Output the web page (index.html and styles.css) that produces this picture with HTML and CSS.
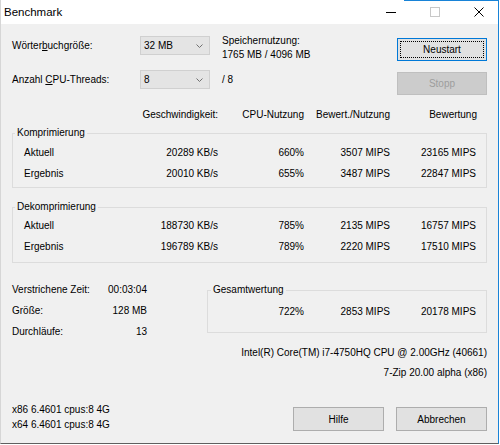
FILE: index.html
```html
<!DOCTYPE html>
<html lang="de">
<head>
<meta charset="utf-8">
<title>Benchmark</title>
<link rel="stylesheet" href="styles.css">
</head>
<body>
<div class="window">
  <div class="titlebar">
    <span class="title">Benchmark</span>
    <div class="caption-buttons">
      <span class="cap-btn"><svg width="10" height="10" viewBox="0 0 10 10"><path d="M0 5.5H10" stroke="#000" stroke-width="1"/></svg></span>
      <span class="cap-btn"><svg width="10" height="10" viewBox="0 0 10 10"><rect x="0.5" y="0.5" width="9" height="9" fill="none" stroke="#c8c8c8"/></svg></span>
      <span class="cap-btn"><svg width="10" height="10" viewBox="0 0 10 10"><path d="M0.5 0.5L9.5 9.5M9.5 0.5L0.5 9.5" stroke="#000" stroke-width="1"/></svg></span>
    </div>
  </div>
  <div class="content">
    <div class="top">
      <span class="lbl">Wörter<u>b</u>uchgröße:</span>
      <div class="combo"><span>32 MB</span><svg class="chev" width="7" height="4" viewBox="0 0 7 4"><path d="M0.5 0.5L3.5 3.5L6.5 0.5" fill="none" stroke="#707070"/></svg></div>
      <div class="mem"><div>Speichernutzung:</div><div>1765 MB / 4096 MB</div></div>
      <button class="btn btn-default">Neustart</button>
      <span class="lbl">Anzahl <u>C</u>PU-Threads:</span>
      <div class="combo"><span>8</span><svg class="chev" width="7" height="4" viewBox="0 0 7 4"><path d="M0.5 0.5L3.5 3.5L6.5 0.5" fill="none" stroke="#707070"/></svg></div>
      <span class="lbl info">/ 8</span>
      <button class="btn" disabled>Stopp</button>
    </div>

    <div class="cols">
      <span>Geschwindigkeit:</span>
      <span>CPU-Nutzung</span>
      <span>Bewert./Nutzung</span>
      <span>Bewertung</span>
    </div>

    <fieldset class="group">
      <legend>Komprimierung</legend>
      <div class="rows rows-comp">
        <div class="row"><span class="name">Aktuell</span><span>20289 KB/s</span><span>660%</span><span>3507 MIPS</span><span>23165 MIPS</span></div>
        <div class="row"><span class="name">Ergebnis</span><span>20010 KB/s</span><span>655%</span><span>3487 MIPS</span><span>22847 MIPS</span></div>
      </div>
    </fieldset>

    <fieldset class="group group-second">
      <legend>Dekomprimierung</legend>
      <div class="rows rows-decomp">
        <div class="row"><span class="name">Aktuell</span><span>188730 KB/s</span><span>785%</span><span>2135 MIPS</span><span>16757 MIPS</span></div>
        <div class="row"><span class="name">Ergebnis</span><span>196789 KB/s</span><span>789%</span><span>2220 MIPS</span><span>17510 MIPS</span></div>
      </div>
    </fieldset>

    <div class="summary">
      <div class="stats">
        <span>Verstrichene Zeit:</span><span class="v">00:03:04</span>
        <span>Größe:</span><span class="v">128 MB</span>
        <span>Durchläufe:</span><span class="v">13</span>
      </div>
      <fieldset class="group total">
        <legend>Gesamtwertung</legend>
        <div class="rows rows-total">
          <div class="row row-total"><span>722%</span><span>2853 MIPS</span><span>20178 MIPS</span></div>
        </div>
      </fieldset>
    </div>

    <div class="cpu">
      <div>Intel(R) Core(TM) i7-4750HQ CPU @ 2.00GHz (40661)</div>
      <div>7-Zip 20.00 alpha (x86)</div>
    </div>

    <div class="footer">
      <div class="versions">
        <div>x86 6.4601 cpus:8 4G</div>
        <div>x64 6.4601 cpus:8 4G</div>
      </div>
      <button class="btn btn-foot">Hilfe</button>
      <button class="btn btn-foot">Abbrechen</button>
    </div>
  </div>
</div>
</body>
</html>
```
FILE: styles.css
```css
* { box-sizing: border-box; }

html, body {
  margin: 0;
  padding: 0;
  background: #ffffff;
}

body {
  font-family: "Liberation Sans", Arial, sans-serif;
  font-size: 10px;
  color: #000;
}

.window {
  width: 499px;
  height: 444px;
  background: #f0f0f0;
  border-left: 1px solid #d6d6d6;
  border-right: 1px solid #1883d7;
  border-bottom: 1px solid #5f5f5f;
  display: flex;
  flex-direction: column;
  overflow: hidden;
}

.titlebar {
  height: 24px;
  flex: none;
  display: flex;
  align-items: center;
  background: linear-gradient(#1883d7, #1883d7) right top / 94px 1px no-repeat, #ffffff;
}

.title {
  flex: 1;
  font-size: 11.5px;
  padding-left: 3px;
}

.caption-buttons {
  display: flex;
  height: 24px;
  margin-right: -3px;
}

.cap-btn {
  width: 44px;
  display: flex;
  align-items: center;
  justify-content: center;
}

.cap-btn svg { display: block; }

.content {
  flex: 1;
  padding: 10px 11px 0 11px;
  display: flex;
  flex-direction: column;
}

/* top settings */
.top {
  display: grid;
  grid-template-columns: 128px 70px 1fr 90px;
  grid-auto-rows: 34px;
}

.lbl {
  margin-top: 2px;
  line-height: 19px;
}

.info { padding-left: 12px; }

.combo {
  margin-top: 2px;
  height: 19px;
  background: #e4e4e4;
  border: 1px solid #d0d0d0;
  display: flex;
  align-items: center;
  justify-content: space-between;
  padding: 0 6px 0 3px;
  line-height: 17px;
}

.chev { display: block; }

.mem {
  padding-left: 12px;
  line-height: 14px;
}

.btn {
  font-family: "Liberation Sans", Arial, sans-serif;
  font-size: 10px;
  color: #000;
  background: #e1e1e1;
  border: 1px solid #adadad;
  margin: 4px 0 0 0;
  padding: 0;
  height: 23px;
}

.btn-default {
  border-color: #0078d7;
  outline: 1px dotted #000;
  outline-offset: -4px;
}

.btn:disabled {
  background: #cccccc;
  border-color: #bfbfbf;
  color: #9d9d9d;
}

/* column headers */
.cols {
  display: grid;
  grid-template-columns: 206px 86px 86px 87px;
  height: 25px;
  line-height: 25px;
  text-align: right;
}

/* group boxes */
.group {
  margin: 0;
  padding: 0;
  border: 1px solid #dcdcdc;
  min-width: 0;
}

.group legend {
  margin-left: 2px;
  padding: 0 2px;
  line-height: 12px;
}

.group-second { margin-top: 13px; }

.rows { padding-left: 11px; padding-right: 10px; }
.rows-comp { padding-top: 3px; padding-bottom: 3px; }
.rows-decomp { padding-top: 2px; padding-bottom: 5px; }

.row {
  display: grid;
  grid-template-columns: 1fr 100px 86px 86px 86px;
  height: 21px;
  line-height: 21px;
  text-align: right;
}

.row .name { text-align: left; }

/* summary */
.summary {
  display: flex;
  margin-top: 16px;
}

.stats {
  width: 135px;
  display: grid;
  grid-template-columns: 1fr auto;
  grid-auto-rows: 21px;
  line-height: 21px;
  align-self: flex-start;
}

.stats .v { text-align: right; }

.total {
  width: 280px;
  margin-left: auto;
  margin-top: 5px;
  align-self: flex-start;
}

.total legend { margin-left: 3px; }

.rows-total {
  padding: 5px 10px 10px 0;
}

.row-total {
  grid-template-columns: 96px 86px 86px;
}

/* cpu info */
.cpu {
  margin-top: 1px;
  text-align: right;
  line-height: 20px;
}

/* footer */
.footer {
  margin-top: 19px;
  display: flex;
  align-items: flex-end;
}

.versions {
  flex: 1;
  line-height: 15px;
}

.btn-foot {
  width: 91px;
  height: 24px;
  margin: 0 0 1px 12px;
}
```
